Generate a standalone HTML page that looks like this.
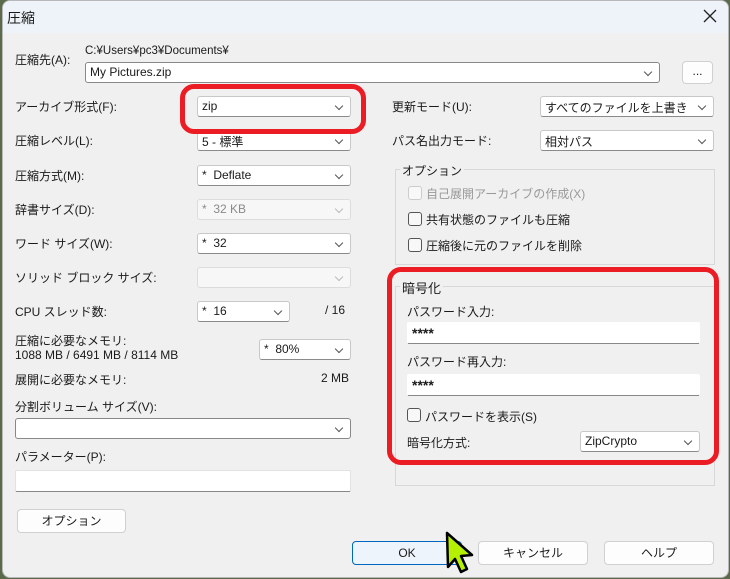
<!DOCTYPE html>
<html><head><meta charset="utf-8"><style>
*{box-sizing:border-box;margin:0;padding:0}
body{width:730px;height:579px;overflow:hidden;background:#5a6a4a;font-family:"Liberation Sans","Noto Sans CJK JP",sans-serif;font-size:12px;color:#1a1a1a;position:relative}
#win{position:absolute;left:2px;top:0;width:727px;height:578px;background:#f0f0f0;border:1px solid #b8b8b8;border-radius:8px 8px 8px 8px;overflow:hidden}
#tb{position:absolute;left:0;top:0;right:0;height:32px;background:#eef3f9}
.a{position:absolute;white-space:nowrap}
.cb{position:absolute;background:#fff;border:1px solid #c8c8c8;border-bottom-color:#8a8a8a;border-radius:3px;height:21px;padding:2px 0 0 4px;font-size:12px}
.cb.dis{background:#f7f7f7;border-color:#dcdcdc;color:#8a8a8a}
.cb::after{content:"";position:absolute;right:8px;top:6px;width:5px;height:5px;border-right:1px solid #555;border-bottom:1px solid #555;transform:rotate(45deg)}
.cb.dis::after{border-color:#bbb}
.ed{position:absolute;background:#fff;border:1px solid #e2e2e2;border-bottom:1px solid #888;border-radius:2px;height:22px;padding:3px 0 0 4px}
.pw{font-size:14px;font-weight:bold;padding-top:2px}
.btn{position:absolute;background:#fdfdfd;border:1px solid #d0d0d0;border-radius:4px;height:24px;text-align:center;line-height:22px}
.chk{position:absolute;width:14px;height:14px;border:1px solid #555;border-radius:3px;background:#f8f8f8}
.grp{position:absolute;border:1px solid #d8d8d8}
.red{position:absolute;border:5px solid #ec1c24;border-radius:14px}
</style></head><body>
<div id="win">
<div id="tb"></div>
<div class="a" style="left:4px;top:7px;font-size:14px">圧縮</div>
<svg class="a" style="left:700px;top:8px" width="14" height="14"><path d="M1 1L13 13M13 1L1 13" stroke="#222" stroke-width="1.3"/></svg>

<div class="a" style="left:12px;top:50px">圧縮先(A):</div>
<div class="a" style="left:82px;top:44px;font-size:11.5px">C:¥Users¥pc3¥Documents¥</div>
<div class="cb" style="left:82px;top:61px;width:575px;height:21px;border-color:#888">My Pictures.zip</div>
<div class="btn" style="left:679px;top:60px;width:31px;height:23px;line-height:18px">...</div>

<div class="a" style="left:12px;top:97px">アーカイブ形式(F):</div>
<div class="cb" style="left:194px;top:95px;width:154px">zip</div>
<div class="a" style="left:12px;top:131px">圧縮レベル(L):</div>
<div class="cb" style="left:194px;top:129px;width:154px">5 - 標準</div>
<div class="a" style="left:12px;top:166px">圧縮方式(M):</div>
<div class="cb" style="left:194px;top:164px;width:154px">*&nbsp; Deflate</div>
<div class="a" style="left:12px;top:200px">辞書サイズ(D):</div>
<div class="cb dis" style="left:194px;top:198px;width:154px">*&nbsp; 32 KB</div>
<div class="a" style="left:12px;top:234px">ワード サイズ(W):</div>
<div class="cb" style="left:194px;top:232px;width:154px">*&nbsp; 32</div>
<div class="a" style="left:12px;top:268px">ソリッド ブロック サイズ:</div>
<div class="cb dis" style="left:194px;top:266px;width:154px"></div>
<div class="a" style="left:12px;top:302px">CPU スレッド数:</div>
<div class="cb" style="left:194px;top:300px;width:93px">*&nbsp; 16</div>
<div class="a" style="left:322px;top:302px">/ 16</div>
<div class="a" style="left:12px;top:331px">圧縮に必要なメモリ:</div>
<div class="a" style="left:12px;top:347px">1088 MB / 6491 MB / 8114 MB</div>
<div class="cb" style="left:256px;top:338px;width:92px">*&nbsp; 80%</div>
<div class="a" style="left:12px;top:370px">展開に必要なメモリ:</div>
<div class="a" style="left:318px;top:370px">2 MB</div>
<div class="a" style="left:12px;top:397px">分割ボリューム サイズ(V):</div>
<div class="cb" style="left:12px;top:417px;width:336px;border-color:#888"></div>
<div class="a" style="left:12px;top:447px">パラメーター(P):</div>
<div class="ed" style="left:12px;top:469px;width:336px"></div>
<div class="btn" style="left:14px;top:508px;width:109px">オプション</div>

<div class="a" style="left:389px;top:97px">更新モード(U):</div>
<div class="cb" style="left:537px;top:95px;width:174px">すべてのファイルを上書き</div>
<div class="a" style="left:389px;top:131px">パス名出力モード:</div>
<div class="cb" style="left:537px;top:129px;width:174px">相対パス</div>

<div class="grp" style="left:392px;top:168px;width:320px;height:96px"></div>
<div class="a" style="left:397px;top:161px;background:#f0f0f0;padding:0 2px">オプション</div>
<div class="chk" style="left:405px;top:185px;border-color:#ccc"></div>
<div class="a" style="left:423px;top:184px;color:#999">自己展開アーカイブの作成(X)</div>
<div class="chk" style="left:405px;top:211px"></div>
<div class="a" style="left:423px;top:210px">共有状態のファイルも圧縮</div>
<div class="chk" style="left:405px;top:237px"></div>
<div class="a" style="left:423px;top:236px">圧縮後に元のファイルを削除</div>

<div class="grp" style="left:392px;top:285px;width:320px;height:200px"></div>
<div class="a" style="left:397px;top:277px;background:#f0f0f0;padding:0 2px;font-size:13px">暗号化</div>
<div class="a" style="left:404px;top:302px">パスワード入力:</div>
<div class="ed pw" style="left:404px;top:321px;width:293px;border-color:#fff;border-bottom-color:#888">****</div>
<div class="a" style="left:404px;top:352px">パスワード再入力:</div>
<div class="ed pw" style="left:404px;top:373px;width:293px;border-color:#fff;border-bottom-color:#888">****</div>
<div class="chk" style="left:404px;top:407px"></div>
<div class="a" style="left:422px;top:407px">パスワードを表示(S)</div>
<div class="a" style="left:404px;top:433px">暗号化方式:</div>
<div class="cb" style="left:577px;top:430px;width:120px">ZipCrypto</div>

<div class="red" style="left:177px;top:83px;width:186px;height:50px"></div>
<div class="red" style="left:384px;top:266px;width:332px;height:198px"></div>

<div class="btn" style="left:349px;top:540px;width:110px;background:#eef4fb;border-color:#0067c0">OK</div>
<div class="btn" style="left:475px;top:540px;width:110px">キャンセル</div>
<div class="btn" style="left:601px;top:540px;width:110px">ヘルプ</div>
</div>
<svg style="position:absolute;left:0;top:0" width="730" height="579"><path d="M447 533 L448 567 L455 559 L461 572 L467 569 L461 556 L472 555 Z" fill="#b5f000" stroke="#000" stroke-width="2.5" stroke-linejoin="round"/></svg>
</body></html>
